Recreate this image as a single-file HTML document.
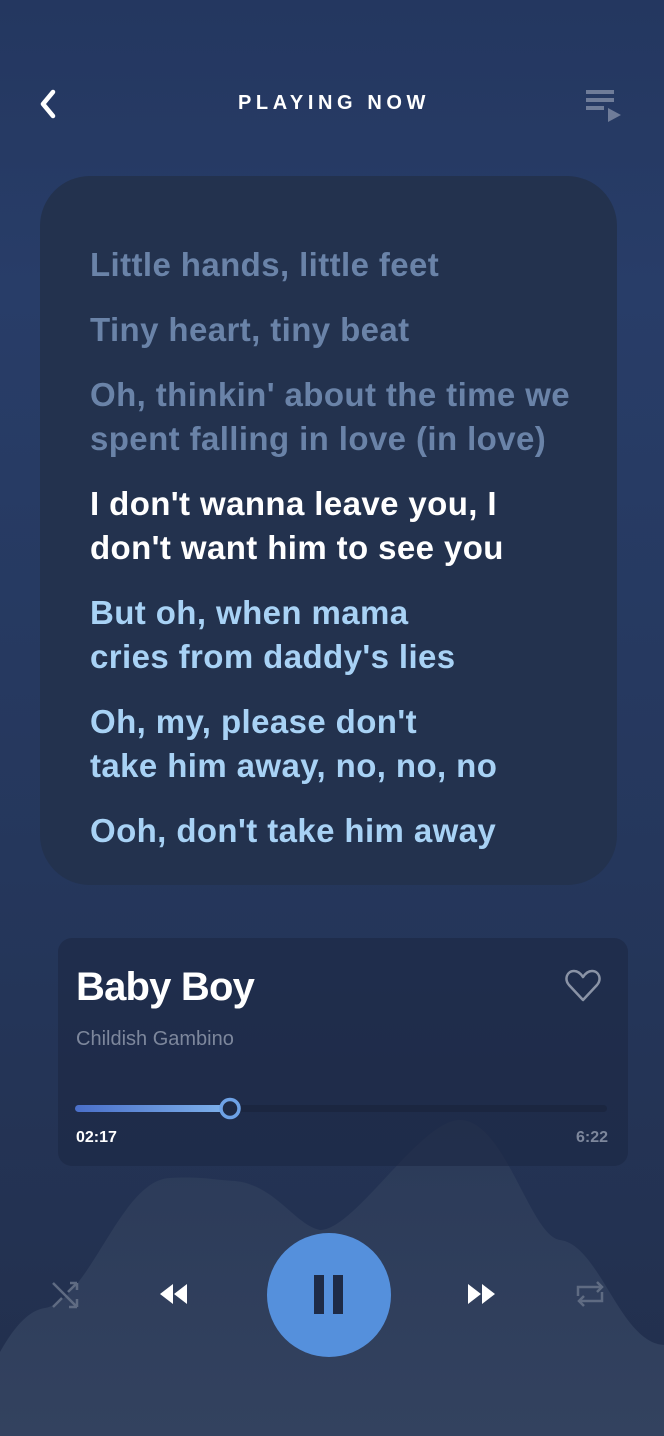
<!DOCTYPE html>
<html><head><meta charset="utf-8"><style>
*{margin:0;padding:0;box-sizing:border-box}
body{width:664px;height:1436px;overflow:hidden;font-family:"Liberation Sans",sans-serif;background:linear-gradient(180deg,#243760 0%,#283d68 20%,#25375c 60%,#222f4c 100%);position:relative}
.hdr{position:absolute;top:92px;left:0;width:664px;text-align:center;color:#fff;font-size:20px;font-weight:bold;letter-spacing:4.6px;padding-left:4px}
.panel{position:absolute;left:40px;top:176px;width:577px;height:709px;border-radius:50px;background:#23324e}
.ly{position:absolute;left:90px;top:243px;font-size:33px;font-weight:bold;letter-spacing:0.4px;line-height:44px;white-space:nowrap}
.ly p{margin-bottom:21px}
.f{color:#6a83a8}.w{color:#fff}.b{color:#a8d2f5}
.card{position:absolute;left:58px;top:938px;width:570px;height:228px;background:rgba(28,38,66,0.55);border-radius:14px}
.t{position:absolute;left:76px;top:965px;color:#fff;font-size:40px;font-weight:bold;letter-spacing:-0.8px}
.a{position:absolute;left:76px;top:1028px;color:#7d879c;font-size:20px}
.tm{position:absolute;top:1129px;font-size:16px;font-weight:bold}
</style></head><body>
<svg style="position:absolute;left:0;top:0" width="664" height="1436">
<defs><linearGradient id="wg" x1="0" y1="0" x2="0" y2="1"><stop offset="0" stop-color="#2b3a58"/><stop offset="1" stop-color="#33425f"/></linearGradient></defs>
<path d="M0 1352 C15 1325 30 1310 45 1308 C90 1300 120 1180 170 1178 C200 1176 215 1180 235 1181 C275 1185 295 1225 320 1230 C355 1230 420 1120 460 1120 C505 1120 530 1236 560 1240 C600 1245 620 1343 664 1345 L664 1436 L0 1436 Z" fill="url(#wg)"/>
</svg>
<div class="hdr">PLAYING NOW</div>
<svg style="position:absolute;left:36px;top:86px" width="24" height="36"><path d="M17 6 L7 18 L17 30" stroke="#fff" stroke-width="4.5" fill="none" stroke-linecap="round" stroke-linejoin="round"/></svg>
<svg style="position:absolute;left:584px;top:88px" width="40" height="36"><g fill="#6f7c99"><rect x="2" y="2" width="28" height="4"/><rect x="2" y="10" width="28" height="4"/><rect x="2" y="18" width="18" height="4"/><path d="M24 20 L37 27 L24 34 Z"/></g></svg>
<div class="panel"></div>
<div class="ly">
<p class="f">Little hands, little feet</p>
<p class="f">Tiny heart, tiny beat</p>
<p class="f">Oh, thinkin' about the time we<br>spent falling in love (in love)</p>
<p class="w">I don't wanna leave you, I<br>don't want him to see you</p>
<p class="b">But oh, when mama<br>cries from daddy's lies</p>
<p class="b">Oh, my, please don't<br>take him away, no, no, no</p>
<p class="b">Ooh, don't take him away</p>
</div>
<div class="card"></div>
<div class="t">Baby Boy</div>
<div class="a">Childish Gambino</div>
<svg style="position:absolute;left:564px;top:968px" width="38" height="36"><path d="M19 32 L5 17 C0 11 3 3 10 3 C14 3 17 6 19 9 C21 6 24 3 28 3 C35 3 38 11 33 17 Z" stroke="#8a93a6" stroke-width="2.5" fill="none" stroke-linejoin="round"/></svg>
<svg style="position:absolute;left:70px;top:1096px" width="545" height="24">
<defs><linearGradient id="g" x1="0" x2="1"><stop offset="0" stop-color="#4a6fc9"/><stop offset="1" stop-color="#7fb3ec"/></linearGradient></defs>
<rect x="5" y="9" width="532" height="7" rx="3.5" fill="#1b2640"/>
<rect x="5" y="9" width="156" height="7" rx="3.5" fill="url(#g)"/>
<circle cx="160" cy="12.5" r="9" fill="#1e2a45" stroke="#6ea2e6" stroke-width="3.5"/>
</svg>
<div class="tm" style="left:76px;color:#fff">02:17</div>
<div class="tm" style="right:56px;color:#7d879c">6:22</div>
<div style="position:absolute;left:267px;top:1233px;width:124px;height:124px;border-radius:50%;background:#5590dc"></div>
<div style="position:absolute;left:314px;top:1275px;width:10px;height:39px;background:#1e2b47"></div>
<div style="position:absolute;left:333px;top:1275px;width:10px;height:39px;background:#1e2b47"></div>
<svg style="position:absolute;left:158px;top:1282px" width="34" height="26"><path d="M2 12 L15 2 L15 22 Z M16 12 L29 2 L29 22 Z" fill="#fff"/></svg>
<svg style="position:absolute;left:466px;top:1282px" width="34" height="26"><path d="M2 2 L15 12 L2 22 Z M16 2 L29 12 L16 22 Z" fill="#fff"/></svg>
<svg style="position:absolute;left:50px;top:1280px" width="32" height="30"><g stroke="#5f6b82" stroke-width="2.5" fill="none"><path d="M3 3 L27 27 M27 27 L19 27 M27 27 L27 19"/><path d="M3 27 L12 18 M18 12 L27 3 M27 3 L20 3 M27 3 L27 10"/></g></svg>
<svg style="position:absolute;left:574px;top:1278px" width="34" height="34"><g stroke="#5f6b82" stroke-width="2.5" fill="none"><path d="M4 18 L4 9 L28 9 M23 4 L28 9 L23 14"/><path d="M28 14 L28 23 L5 23 M10 18 L5 23 L10 28"/></g></svg>
</body></html>
